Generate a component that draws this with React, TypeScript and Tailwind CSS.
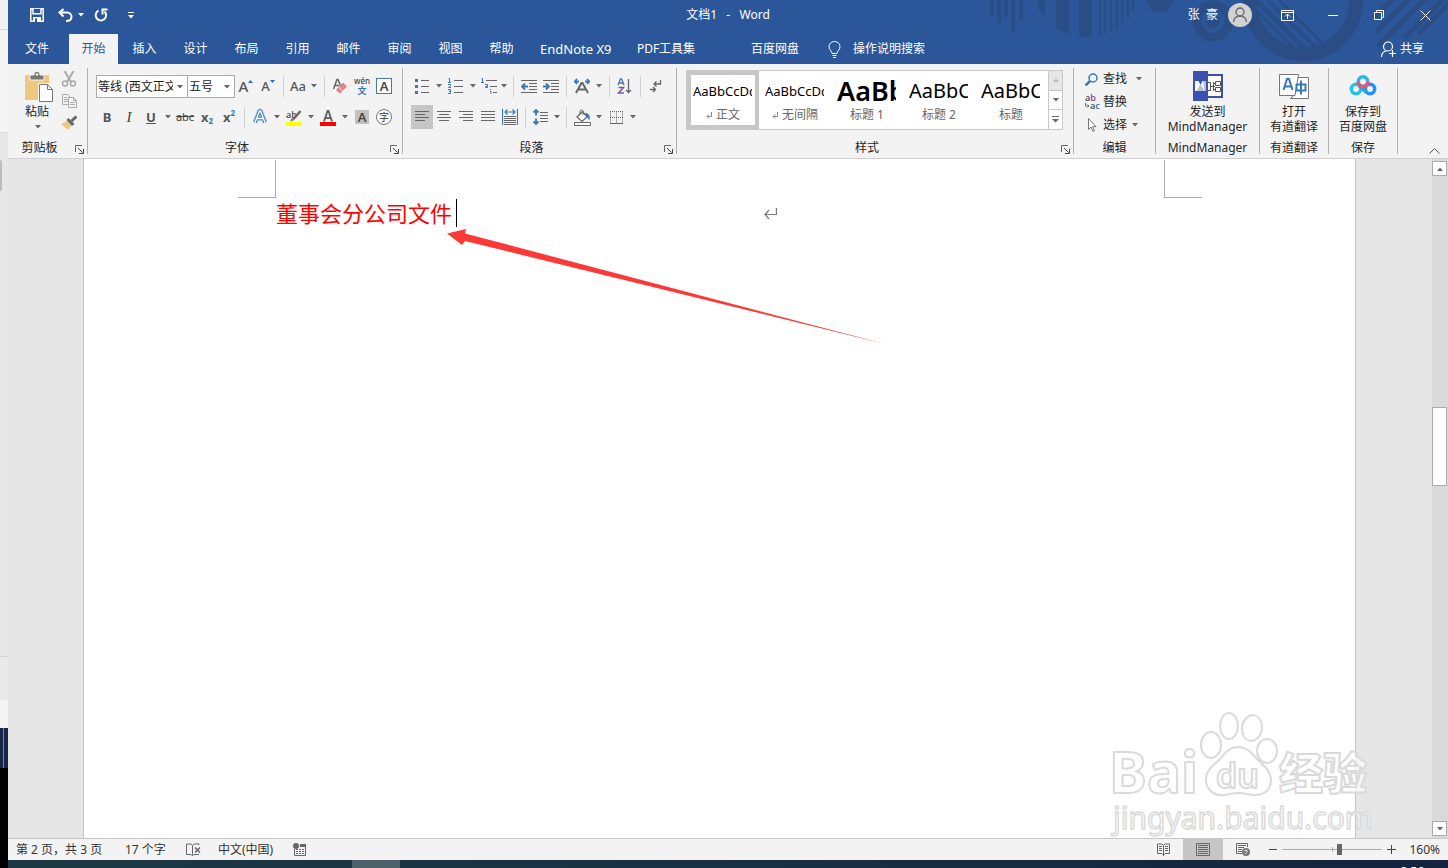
import type { ReactNode } from 'react';
import clsx from 'clsx';

const tabs = ['插入', '设计', '布局', '引用', '邮件', '审阅', '视图', '帮助'];

const styleItems = [
    { preview: 'AaBbCcDd', label: '正文', mark: true, size: 'text-[13px]' },
    { preview: 'AaBbCcDd', label: '无间隔', mark: true, size: 'text-[13px]' },
    { preview: 'AaBb', label: '标题 1', mark: false, size: 'text-[27px] font-semibold' },
    { preview: 'AaBbC', label: '标题 2', mark: false, size: 'text-[20px]' },
    { preview: 'AaBbC', label: '标题', mark: false, size: 'text-[20px]' },
];

/* ---------- small building blocks ---------- */

const Caret = ({ className = 'fill-[#666]' }: { className?: string }) => (
    <svg width="6" height="4" viewBox="0 0 6 4" className={className}>
        <path d="M0 0h6L3 3.5z" />
    </svg>
);

type BtnProps = { label: string; children?: ReactNode; className?: string };

const Btn = ({ label, children, className }: BtnProps) => (
    <button type="button" aria-label={label} className={clsx('flex h-6 shrink-0 items-center justify-center', className ?? 'w-[22px]')}>
        {children}
    </button>
);

const Drop = ({ label }: { label: string }) => (
    <Btn label={`${label}选项`} className="w-3">
        <Caret />
    </Btn>
);

const Sep = () => <div className="mx-1 h-[21px] w-px shrink-0 bg-[#d0d0d0]" />;

const Icon = ({ w = 16, h = 16, children }: { w?: number; h?: number; children: ReactNode }) => (
    <svg width={w} height={h} viewBox={`0 0 ${w} ${h}`} fill="none" stroke="#666" className="shrink-0">
        {children}
    </svg>
);

const Lines = ({ d }: { d: string }) => (
    <Icon w={14} h={14}>
        <path d={d} />
    </Icon>
);

type GroupProps = { label: string; launcher?: boolean; className: string; children: ReactNode };

const Group = ({ label, launcher, className, children }: GroupProps) => (
    <section aria-label={label} className={clsx('flex shrink-0 flex-col border-r border-[#b1b1b1]', className)}>
        <div className="flex-1">{children}</div>
        <div className="flex h-[13px] items-center">
            <span className="flex-1 text-center leading-[15px]">{label}</span>
            {launcher && (
                <button type="button" aria-label={`${label}设置`} className="flex h-[13px] w-4 items-center justify-end pr-[3px] pt-1">
                    <Icon w={9} h={9}>
                        <path d="M.5 7V.5H7" stroke="#666" />
                        <path d="M3 3l4.5 4.5M8.5 4v4.5H4" stroke="#444" />
                    </Icon>
                </button>
            )}
        </div>
    </section>
);

const Rows = ({ children }: { children: ReactNode }) => <div className="flex flex-col gap-[7px] pl-2 pt-[6px]">{children}</div>;
const Row = ({ children }: { children: ReactNode }) => <div className="flex h-6 items-center">{children}</div>;

const Combo = ({ label, value, className }: { label: string; value: string; className: string }) => (
    <div className={clsx('relative h-[23px] border border-[#ababab] bg-white', className)}>
        <select aria-label={label} className="h-full w-full appearance-none bg-white pl-px pr-[14px] pt-px text-[12px] text-[#222] outline-none">
            <option>{value}</option>
        </select>
        <span className="pointer-events-none absolute right-1 top-[9px]">
            <Caret />
        </span>
    </div>
);

/* ---------- title bar ---------- */

const HeaderArt = () => (
    <svg width="460" height="64" viewBox="988 0 460 64" className="absolute right-0 top-0 fill-[#2a4d86]" aria-hidden="true">
        <defs>
            <clipPath id="bowl"><circle cx="1087" cy="-18" r="55" /></clipPath>
            <clipPath id="ring"><circle cx="1303" cy="1" r="46" /></clipPath>
        </defs>
        <path d="M990 0h4v16h-4zM997 0h4v23h-4zM1004 0h4v17h-4zM1011 0h4v32h-4zM1019 0h4v20h-4z" />
        <path clipPath="url(#bowl)" d="M1038 0h7v40h-7zM1056 0h13v40h-13zM1079 0h13v40h-13zM1099 0h2v40h-2zM1104 0h2v40h-2zM1110 0h2v40h-2zM1116 0h2v40h-2zM1121 0h2v40h-2zM1127 0h2v40h-2zM1132 0h2v40h-2z" />
        <circle cx="1160" cy="-2" r="14" />
        <circle cx="1213" cy="21" r="16" fill="none" stroke="#2a4d86" strokeWidth="9" />
        <circle cx="1213" cy="21" r="7" />
        <circle cx="1303" cy="1" r="53" fill="none" stroke="#2a4d86" strokeWidth="14" />
        <g clipPath="url(#ring)" stroke="#2a4d86" strokeWidth="3">
            <path d="M1246 0l60 60M1257 0l60 60M1268 0l60 60M1279 0l60 60" />
            <path d="M1252 -4l64 64" strokeWidth="5" />
        </g>
        <g stroke="#2a4d86" strokeWidth="5">
            <path d="M1396 -4l-22 22M1412 -4l-36 36M1428 -4l-50 50M1446 -4l-42 42M1456 -4l-38 38" />
        </g>
    </svg>
);

const TitleBar = () => (
    <div className="grid h-[34px] grid-cols-[1fr_auto_1fr] items-center pb-1">
        <div className="flex items-center pl-[19px]">
            <Btn label="保存" className="w-5">
                <svg width="14" height="14" viewBox="0 0 14 14" fill="none" stroke="#fff" strokeWidth="1.500">
                    <path d="M.8.8h12.4v12.4H.8z" />
                    <path d="M3 .8v5h8v-5" fill="#2b579a" />
                    <path d="M3 9h8v5H3z" fill="#fff" stroke="none" />
                    <path d="M5 10.500h2V14H5z" fill="#2b579a" stroke="none" />
                </svg>
            </Btn>
            <Btn label="撤消" className="ml-2 w-5">
                <svg width="15" height="14" viewBox="0 0 15 14" fill="none" stroke="#fff" strokeWidth="2">
                    <path d="M5.500 1L1.500 4.500l4 4M2 4.500h6.500c3 0 5 1.800 5 4.200S11.500 13 8 13" />
                </svg>
            </Btn>
            <Btn label="撤消选项" className="w-3"><Caret className="fill-white" /></Btn>
            <Btn label="重复" className="ml-1 w-5">
                <svg width="14" height="14" viewBox="0 0 14 14" fill="none" stroke="#fff" strokeWidth="2">
                    <path d="M4.500 2.600A5.200 5.200 0 1 0 10.500 3.500M8.500 6.500V1.500H13.500" />
                </svg>
            </Btn>
            <Btn label="自定义快速访问工具栏" className="ml-[10px] w-5">
                <svg width="6" height="7" viewBox="0 0 6 7" className="fill-white"><path d="M0 0h6v1H0zM0 3h6L3 6.500z" /></svg>
            </Btn>
        </div>
        <h1 className="whitespace-pre leading-4 text-white">{'文档1   -   Word'}</h1>
        <div className="flex items-center justify-end text-white">
            <span className="mr-[10px] whitespace-pre">张  豪</span>
            <button type="button" aria-label="帐户" className="mr-3 flex h-6 w-6 items-center justify-center rounded-full bg-[#d2d2d2]">
                <svg width="16" height="16" viewBox="0 0 16 16" fill="none" stroke="#666" strokeWidth="1.300">
                    <circle cx="8" cy="5" r="4" />
                    <path d="M1.500 15c.5-3.500 3-6 6.500-6s6 2.500 6.500 6" />
                </svg>
            </button>
            <Btn label="功能区显示选项" className="w-[46px]">
                <svg width="13" height="11" viewBox="0 0 13 11" fill="none" stroke="#fff"><path d="M.5.5h12v10H.5zM.5 2.500h12M6.500 9V4.500M4 6.500L6.500 4 9 6.500" /></svg>
            </Btn>
            <Btn label="最小化" className="w-[46px]">
                <svg width="10" height="10" viewBox="0 0 10 10" stroke="#fff"><path d="M0 5.500h10" /></svg>
            </Btn>
            <Btn label="还原" className="w-[46px]">
                <svg width="10" height="10" viewBox="0 0 10 10" fill="none" stroke="#fff"><path d="M.5 2.500h7v7h-7zM2.500 2.500v-2h7v7h-2" /></svg>
            </Btn>
            <Btn label="关闭" className="w-[46px]">
                <svg width="11" height="11" viewBox="0 0 11 11" stroke="#fff"><path d="M.5.5l10 10M10.500.5l-10 10" /></svg>
            </Btn>
        </div>
    </div>
);

const tabClass = 'h-[30px] shrink-0 whitespace-nowrap leading-[28px]';

const TabBar = () => (
    <nav className="flex h-[30px] text-white">
        <button type="button" className={clsx(tabClass, 'mr-[3px] w-[58px]')}>文件</button>
        <button type="button" className={clsx(tabClass, 'w-[49px] bg-[#f3f3f3] text-[#2b579a]')}>开始</button>
        {tabs.map((t) => (
            <button key={t} type="button" className={clsx(tabClass, 'ml-[2px] w-[49px]')}>{t}</button>
        ))}
        <button type="button" className={clsx(tabClass, 'ml-[2px] w-[97px] pl-3 text-left text-[13px]')}>EndNote X9</button>
        <button type="button" className={clsx(tabClass, 'w-[82px]')}>PDF工具集</button>
        <button type="button" className={clsx(tabClass, 'ml-8 w-[72px]')}>百度网盘</button>
        <button type="button" className={clsx(tabClass, 'ml-[17px] flex items-center gap-3')}>
            <svg width="13" height="17" viewBox="0 0 13 17" fill="none" stroke="#fff">
                <path d="M4 12.500c0-2.500-3-3.500-3-7a5.500 5 0 0 1 11 0c0 3.500-3 4.500-3 7zM4.500 14.500h4M5 16.500h3" />
            </svg>
            操作说明搜索
        </button>
        <button type="button" className={clsx(tabClass, 'ml-auto mr-6 flex items-center gap-1')}>
            <svg width="15" height="17" viewBox="0 0 15 17" fill="none" stroke="#fff" strokeWidth="1.200">
                <circle cx="7" cy="5.500" r="4.500" />
                <path d="M.5 16c0-3.500 2-5.500 5-6M11.500 9v7M8 12.500h7" />
            </svg>
            共享
        </button>
    </nav>
);

/* ---------- ribbon ---------- */

const ClipboardGroup = () => (
    <Group label="剪贴板" launcher className="w-20">
        <div className="flex">
            <button type="button" className="ml-4 mr-[2px] flex w-[30px] flex-col items-start pt-[3px]">
                <svg width="30" height="32" viewBox="0 0 30 32" className="shrink-0">
                    <path d="M1 4h24v25H1z" fill="#edc87e" />
                    <path d="M6 4h4c0-5 6-5 6 0h4v5H6z" fill="#777" stroke="#f3f3f3" />
                    <circle cx="13" cy="3.500" r="1.200" fill="#fff" />
                    <path d="M14 12h11l5 5v15H14z" fill="#f3f3f3" />
                    <path d="M15.500 13.500h8l5 5v12h-13z" fill="#fff" stroke="#777" />
                    <path d="M23.500 13.500v5h5" fill="none" stroke="#777" />
                </svg>
                <span className="w-[26px] text-center leading-[18px]">粘贴</span>
                <span className="flex w-[28px] justify-center pt-1"><Caret /></span>
            </button>
            <div className="flex w-[26px] flex-col items-center">
                <button type="button" aria-label="剪切" className="flex h-[22px] items-center">
                    <Icon>
                        <g stroke="#aaa" strokeWidth="1.500">
                            <path d="M3.500 0l6.500 11M12.500 0L6 11" strokeWidth="2" />
                            <circle cx="4" cy="12.500" r="2.500" /><circle cx="12" cy="12.500" r="2.500" />
                        </g>
                    </Icon>
                </button>
                <button type="button" aria-label="复制" className="flex h-[22px] items-center">
                    <Icon>
                        <g stroke="#aaa" fill="#f3f3f3">
                            <path d="M1.500 1.500h5l3 3v7h-8zM3 4.500h3M3 6.500h4M3 8.500h4" />
                            <path d="M7.500 4.500h5l3 3v7h-8zM12.500 4.500v3h3M9 9.500h5M9 11.500h5" />
                        </g>
                    </Icon>
                </button>
                <button type="button" aria-label="格式刷" className="flex h-[22px] items-center">
                    <Icon>
                        <path d="M0 9l6-3 4.500 4.500L7 15z" fill="#edc87e" stroke="none" />
                        <path d="M5.500 5l2-2 6 6-2.500 2z" fill="#666" stroke="none" />
                        <path d="M10.500 6L15.500 1.500" strokeWidth="3" />
                    </Icon>
                </button>
            </div>
        </div>
    </Group>
);

const glyph = 'font-bold text-[#555] leading-5';

const FontGroup = () => (
    <Group label="字体" launcher className="w-[315px]">
        <Rows>
            <Row>
                <Combo label="字体名称" value="等线 (西文正文)" className="w-[92px]" />
                <Combo label="字号" value="五号" className="-ml-px w-12" />
                <Btn label="增大字号">
                    <span className="text-[15px] font-medium text-[#555]">A</span>
                    <svg width="5" height="12" viewBox="0 0 5 12" className="fill-[#2f6fb0]"><path d="M0 3h5L2.500 0z" /></svg>
                </Btn>
                <Btn label="减小字号">
                    <span className="text-[13px] font-medium text-[#555]">A</span>
                    <svg width="5" height="12" viewBox="0 0 5 12" className="fill-[#2f6fb0]"><path d="M0 0h5L2.500 3z" /></svg>
                </Btn>
                <Sep />
                <Btn label="更改大小写" className="w-5"><span className="text-[13px] font-medium text-[#555]">Aa</span></Btn>
                <Drop label="更改大小写" />
                <Sep />
                <Btn label="清除所有格式">
                    <Icon>
                        <path d="M1.500 11L5 1.500h1L9 9M3 7.500h4" strokeWidth="1.500" />
                        <path d="M5 11l6-6 3.500 3.500-6 6H7l-2-2z" fill="#e8808f" stroke="#e8808f" />
                        <path d="M6.500 9l4 4" stroke="#f3f3f3" />
                    </Icon>
                </Btn>
                <Btn label="拼音指南" className="w-[22px] flex-col">
                    <span className="text-[8px] font-medium leading-[8px] text-[#444]">wén</span>
                    <span className="text-[9px] font-bold leading-[11px] text-[#3a78b5]">文</span>
                </Btn>
                <Btn label="字符边框">
                    <span className="h-4 w-4 border border-[#3f7ab0] bg-white text-center text-[13px] font-semibold leading-[14px] text-[#444]">A</span>
                </Btn>
            </Row>
            <Row>
                <Btn label="加粗"><b className={clsx(glyph, 'text-[13px]')}>B</b></Btn>
                <Btn label="倾斜"><i className="font-['Liberation_Serif',serif] text-[15px] leading-5 text-[#444]">I</i></Btn>
                <Btn label="下划线"><u className={clsx(glyph, 'text-[13px]')}>U</u></Btn>
                <Drop label="下划线" />
                <Btn label="删除线"><s className="text-[11px] leading-5 text-[#444]">abc</s></Btn>
                <Btn label="下标"><span className={clsx(glyph, 'text-[13px]')}>x</span><span className="pt-2 text-[8px] font-bold text-[#3a78b5]">2</span></Btn>
                <Btn label="上标"><span className={clsx(glyph, 'text-[13px]')}>x</span><span className="pb-2 text-[8px] font-bold text-[#3a78b5]">2</span></Btn>
                <Sep />
                <Btn label="文本效果">
                    <svg width="18" height="18" viewBox="0 0 18 18" fill="none" strokeLinejoin="round">
                        <path d="M4 14.500L8.500 3h1L14 14.500M6 10.500h6" stroke="#c4dbf1" strokeWidth="5.500" />
                        <path d="M4 14.500L8.500 3h1L14 14.500M6 10.500h6" stroke="#4a84c0" strokeWidth="3.500" />
                        <path d="M4 14.500L8.500 3h1L14 14.500M6 10.500h6" stroke="#fff" strokeWidth="1.300" />
                    </svg>
                </Btn>
                <Drop label="文本效果" />
                <Btn label="突出显示">
                    <Icon w={16} h={17}>
                        <text x="0" y="9" fontSize="9" fontWeight="600" fill="#555" stroke="none">ab</text>
                        <path d="M14.500 2l-7 8" strokeWidth="2.500" /><path d="M4 12.500l2-3.500 2.500 2z" fill="#666" stroke="none" />
                        <path d="M0 13h16v4H0z" fill="#ff0" stroke="none" />
                    </Icon>
                </Btn>
                <Drop label="突出显示" />
                <Btn label="字体颜色">
                    <Icon w={16} h={17}>
                        <path d="M4 12.500L7.500 2h1L12 12.500M5 9h6" strokeWidth="2" />
                        <path d="M0 13h16v4H0z" fill="#f00" stroke="none" />
                    </Icon>
                </Btn>
                <Drop label="字体颜色" />
                <Btn label="字符底纹"><span className="h-[14px] w-[14px] bg-[#c1c1c1] text-center text-[13px] font-semibold leading-[14px] text-[#444]">A</span></Btn>
                <Btn label="带圈字符"><span className="h-4 w-4 rounded-full border border-[#777] bg-white text-center text-[10px] leading-[14px] text-[#333]">字</span></Btn>
            </Row>
        </Rows>
    </Group>
);

const Arrows = ({ d }: { d: string }) => <path d={d} stroke="#3a78b5" strokeWidth="1.800" />;

const ParagraphGroup = () => (
    <Group label="段落" launcher className="w-[274px]">
        <Rows>
            <Row>
                <Btn label="项目符号">
                    <Icon w={14}>
                        <path d="M6 2.500h8M6 8.500h8M6 14.500h8" />
                        <path d="M0 1h3v3H0zM0 7h3v3H0zM0 13h3v3H0z" fill="#3a78b5" stroke="none" />
                    </Icon>
                </Btn>
                <Drop label="项目符号" />
                <Btn label="编号">
                    <Icon w={16}>
                        <path d="M6 2.500h9M6 8.500h9M6 14.500h9" />
                        <path d="M.5.500h1v4M0 4.500h3M0 6.500h2.500v1.500L.5 9.500H3M0 11.500h2.500v4H0M1 13.500h1.500" stroke="#3a78b5" />
                    </Icon>
                </Btn>
                <Drop label="编号" />
                <Btn label="多级列表" className="w-5">
                    <Icon w={16}>
                        <path d="M5 2.500h11M9 8.500h7M12 14.500h4" />
                        <path d="M.5.500h1v4M0 4.500h3M4 6.500h2.500v3H4.500v-1h2M9.500 11v1M9 13.500h1V16" stroke="#3a78b5" />
                    </Icon>
                </Btn>
                <Btn label="多级列表选项" className="w-[10px]"><Caret /></Btn>
                <Sep />
                <Btn label="减少缩进量">
                    <Icon>
                        <path d="M0 2.500h16M8 5.500h8M8 8.500h8M8 11.500h8M0 14.500h16" />
                        <Arrows d="M7 8.500H1M4 5.500L1 8.500l3 3" />
                    </Icon>
                </Btn>
                <Btn label="增加缩进量">
                    <Icon>
                        <path d="M0 2.500h16M8 5.500h8M8 8.500h8M8 11.500h8M0 14.500h16" />
                        <Arrows d="M0 8.500h6M3 5.500l3 3-3 3" />
                    </Icon>
                </Btn>
                <Sep />
                <Btn label="中文版式">
                    <Icon>
                        <path d="M2 15L7.500 5h1L14 15M4.500 11.500h7" strokeWidth="2" />
                        <Arrows d="M5 3.500H1M3 1L.8 3.500 3 6M11 3.500h4M13 1l2.200 2.500L13 6" />
                    </Icon>
                </Btn>
                <Drop label="中文版式" />
                <Sep />
                <Btn label="排序">
                    <Icon>
                        <path d="M1 7L3.500.8h1L7 7M2 5h4" stroke="#3a78b5" strokeWidth="1.300" />
                        <path d="M1.500 9.500h5l-5 5.500H7" stroke="#8e4bab" strokeWidth="1.500" />
                        <path d="M11.500 1v13.500M9 12l2.500 2.500L14 12" strokeWidth="1.300" />
                    </Icon>
                </Btn>
                <Sep />
                <Btn label="显示编辑标记">
                    <Icon w={12} h={14}>
                        <path d="M10.500 1v4H4M6.500 2.500L4 5l2.500 2.500M0 10.500h5.500M3 8l2.500 2.500L3 13" strokeWidth="1.300" />
                    </Icon>
                </Btn>
            </Row>
            <Row>
                <Btn label="左对齐" className="w-[22px] bg-[#c6c6c6]"><Lines d="M0 1.500h14M0 4.500h10M0 7.500h14M0 10.500h10" /></Btn>
                <Btn label="居中"><Lines d="M0 1.500h14M2 4.500h10M0 7.500h14M2 10.500h10" /></Btn>
                <Btn label="右对齐"><Lines d="M0 1.500h14M4 4.500h10M0 7.500h14M4 10.500h10" /></Btn>
                <Btn label="两端对齐"><Lines d="M0 1.500h14M0 4.500h14M0 7.500h14M0 10.500h14" /></Btn>
                <Btn label="分散对齐">
                    <Icon>
                        <path d="M2 7.500h12M2 9.500h12M2 11.500h12M2 13.500h12M2 15.500h12" />
                        <path d="M.5 0v16M15.500 0v16M3 3h10M5.500.5L3 3l2.500 2.500M10.500.5L13 3l-2.500 2.500" stroke="#3a78b5" strokeWidth="1.200" />
                    </Icon>
                </Btn>
                <Sep />
                <Btn label="行距">
                    <Icon>
                        <path d="M7 3.500h8M7 6.500h8M7 9.500h8M7 12.500h8" />
                        <Arrows d="M3 1v5.500M.5 3.500L3 1l2.500 2.500M3 9.500V15M.5 12.500L3 15l2.500-2.500" />
                    </Icon>
                </Btn>
                <Btn label="行距选项" className="w-[10px]"><Caret /></Btn>
                <Sep />
                <Btn label="底纹">
                    <Icon w={17} h={17}>
                        <path d="M3 8l5.500-5.500L13 8l-5 4.500z" fill="#fff" strokeWidth="1.200" />
                        <path d="M6 6V2.500a1.500 1.500 0 0 1 3 0V6" />
                        <path d="M11 4c3.500 0 5.500 2 4.500 7.500l-2.500-3.500z" fill="#3a78b5" stroke="none" />
                        <path d="M.5 13.500h16v3H.5z" fill="#fff" />
                    </Icon>
                </Btn>
                <Drop label="底纹" />
                <Btn label="边框">
                    <Icon w={13} h={13}>
                        <path d="M.5.5v12M6.500.5v12M12.500.5v12M0 .5h13M0 6.500h13" strokeDasharray="1 1" />
                        <path d="M0 12.500h13" />
                    </Icon>
                </Btn>
                <Drop label="边框" />
            </Row>
        </Rows>
    </Group>
);

const StylesGroup = () => (
    <Group label="样式" launcher className="w-[397px]">
        <div className="ml-[9px] mt-[2px] flex h-[60px] w-[377px] border border-[#c8c8c8] bg-white">
            {styleItems.map((s, i) => (
                <button
                    key={s.label}
                    type="button"
                    className={clsx('h-[58px] w-[72px] shrink-0 overflow-hidden border-4', i === 0 ? 'border-[#c6c6c6]' : 'border-transparent')}
                >
                    <span className={clsx('ml-[2px] block h-[30px] w-[59px] overflow-hidden whitespace-nowrap text-left leading-[28px] text-black', s.size)}>{s.preview}</span>
                    <span className="flex items-center justify-center gap-1 leading-4 text-[#666]">
                        {s.mark && (
                            <svg width="6" height="7" viewBox="0 0 6 7" fill="none" stroke="#888"><path d="M5.500 0v4.500H1M3 2.500L1 4.500l2 2" /></svg>
                        )}
                        {s.label}
                    </span>
                </button>
            ))}
            <div className="ml-auto flex w-[14px] flex-col divide-y divide-[#c8c8c8] border-l border-[#c8c8c8]">
                <button type="button" aria-label="上一行" className="flex flex-1 items-center justify-center bg-[#e6e6e6]">
                    <span className="rotate-180"><Caret className="fill-[#b8b8b8]" /></span>
                </button>
                <button type="button" aria-label="下一行" className="flex flex-1 items-center justify-center"><Caret /></button>
                <button type="button" aria-label="其他样式" className="flex flex-1 items-center justify-center">
                    <svg width="7" height="7" viewBox="0 0 7 7" className="fill-[#666]"><path d="M0 0h7v1H0zM0 3h7L3.500 6.500z" /></svg>
                </button>
            </div>
        </div>
    </Group>
);

const EditGroup = () => (
    <Group label="编辑" className="w-[82px]">
        <div className="flex flex-col pl-[11px]">
            <button type="button" className="flex h-[22px] items-center gap-[5px]">
                <Icon w={13} h={13}>
                    <circle cx="8" cy="5" r="4" stroke="#3a78b5" strokeWidth="1.500" /><path d="M5 8l-4.500 4.500" stroke="#3a78b5" strokeWidth="2.500" />
                </Icon>
                <span className="mr-1">查找</span>
                <Caret />
            </button>
            <button type="button" className="mt-px flex h-[22px] items-center gap-[2px]">
                <Icon>
                    <g stroke="none" fontSize="9" fontWeight="600" fill="#555">
                        <text x="0" y="7">a<tspan fill="#8e4bab">b</tspan></text>
                        <text x="5" y="15">a<tspan fill="#3a78b5">c</tspan></text>
                    </g>
                    <path d="M.5 9v3H4M2.500 10.500L4 12l-1.500 1.500" stroke="#3a78b5" />
                </Icon>
                替换
            </button>
            <button type="button" className="mt-px flex h-[22px] items-center gap-[5px]">
                <Icon w={13} h={16}>
                    <path d="M3.500 1.500v11l2.500-2.500 2 4.500 1.500-.8-2-4h3.500z" fill="#fff" stroke="#777" />
                </Icon>
                选择
                <Caret />
            </button>
        </div>
    </Group>
);

const BigButton = ({ lines, children }: { lines: string[]; children: ReactNode }) => (
    <button type="button" className="flex w-full flex-col items-center pt-[3px]">
        {children}
        <span className="mt-[3px] text-center leading-[15px]">
            {lines[0]}
            <br />
            {lines[1]}
        </span>
    </button>
);

const AddinGroups = () => (
    <>
        <Group label="MindManager" className="w-[104px]">
            <BigButton lines={['发送到', 'MindManager']}>
                <svg width="30" height="30" viewBox="0 0 30 30" fill="none">
                    <path d="M14 4h15v22H14z" fill="#fff" stroke="#3d50a8" strokeWidth="2" />
                    <path d="M0 0h15v30H0z" fill="#3a51b0" />
                    <path d="M2 10h3.500l2 4 2-4H13v10H2z" fill="#fff" />
                    <path d="M7.500 13l4 7h-8zM10 10h3v10h-1.500z" fill="#b9bfd4" />
                    <path d="M15 11.500h2.500v8H15M18 15.500h4M20.500 11v9M20.500 12.500h2M20.500 18.500h2M22.500 10.500h5v4h-5zM22.500 16.500h5v4h-5z" stroke="#555" />
                </svg>
            </BigButton>
        </Group>
        <Group label="有道翻译" className="w-[69px]">
            <BigButton lines={['打开', '有道翻译']}>
                <svg width="30" height="30" viewBox="0 0 30 30" fill="none">
                    <path d="M16.500 6.500h13v21h-18l5-5z" fill="#fff" stroke="#777" />
                    <path d="M.5 3.500h19l-3.500 21H.5z" fill="#fff" stroke="#777" />
                    <path d="M4.500 19L8 8h2l3.500 11M5.500 15.500h7" stroke="#3a78b5" strokeWidth="2" />
                    <path d="M17.500 13.500h9v6h-9zM22 9.500v14" stroke="#3a78b5" strokeWidth="2" />
                </svg>
            </BigButton>
        </Group>
        <Group label="保存" className="w-[69px]">
            <BigButton lines={['保存到', '百度网盘']}>
                <svg width="28" height="30" viewBox="0 0 28 30" fill="none" strokeWidth="3.500">
                    <circle cx="7" cy="18" r="4.700" stroke="#22c3e6" />
                    <circle cx="21" cy="18" r="4.700" stroke="#1e90ff" />
                    <path d="M10.500 15l7 6.500" stroke="#1da5f5" />
                    <circle cx="14" cy="10.500" r="4.700" stroke="#2ab4ef" />
                    <path d="M9.300 11a4.700 4.700 0 0 0 9.400 0" stroke="#f2506c" />
                </svg>
            </BigButton>
        </Group>
    </>
);

const Ribbon = () => (
    <div className="flex h-[95px] overflow-hidden border-b border-[#cfcfcf] bg-[#f3f3f3] py-1 text-[#262626]">
        <ClipboardGroup />
        <FontGroup />
        <ParagraphGroup />
        <StylesGroup />
        <EditGroup />
        <AddinGroups />
        <button type="button" aria-label="折叠功能区" className="ml-auto mr-2 self-end">
            <Icon w={11} h={6}><path d="M.5 5.500l5-5 5 5" stroke="#555" /></Icon>
        </button>
    </div>
);

/* ---------- document ---------- */

const Watermark = () => (
    <svg width="264" height="128" viewBox="1108 710 264 128" className="pointer-events-none absolute bottom-0 right-[76px]" aria-hidden="true">
        <g fill="#fff" fillOpacity="0.7" stroke="#dadada" strokeWidth="2" strokeLinejoin="round">
            <text x="1109" y="793" fontSize="57" fontWeight="700">Bai</text>
            <text x="1279" y="790" fontSize="44" fontWeight="900">经验</text>
            <text x="1113" y="829" fontSize="30" strokeWidth="1.500">jingyan.baidu.com</text>
            <ellipse cx="1211" cy="745" rx="10" ry="13" />
            <ellipse cx="1229" cy="726" rx="9" ry="13" />
            <ellipse cx="1252" cy="728" rx="10" ry="13" transform="rotate(8 1252 728)" />
            <ellipse cx="1267" cy="751" rx="10" ry="12" />
            <path d="M1238 747c-10 0-14 8-20 14-6 5-13 11-12 20 1 10 9 15 18 14 6-1 9-2 15-2s10 2 16 2c9 0 16-5 16-15 0-9-7-14-12-19-6-6-11-14-21-14z" />
            <text x="1216" y="788" fontSize="34" fontWeight="600">du</text>
        </g>
    </svg>
);

const DocumentArea = () => (
    <main className="relative flex min-h-0 flex-1 bg-[#e6e6e6]">
        <div className="w-[75px] shrink-0" />
        <article className="flex-1 border-x border-[#c6c6c6] bg-white pl-[154px] pr-[153px] pt-px">
            <div className="flex justify-between">
                <div className="h-[38px] w-[38px] border-b border-r border-[#ababab]" />
                <div className="h-[38px] w-[38px] border-b border-l border-[#ababab]" />
            </div>
            <p className="flex items-center pl-[38px] pt-px">
                <span className="w-[488px] text-[22px] leading-[28px] text-[#f00]">
                    <span className="inline-block border-r border-black pr-1">董事会分公司文件</span>
                </span>
                <svg width="13" height="11" viewBox="0 0 13 11" fill="none" stroke="#777" strokeWidth="1.200">
                    <path d="M12.400 0v6.500H1M5 2L1 6.500 5 11" />
                </svg>
            </p>
        </article>
        <div className="w-[76px] shrink-0" />
        <div className="flex w-4 shrink-0 flex-col bg-[#dadada] py-[2px]">
            <button type="button" aria-label="向上滚动" className="flex h-[15px] w-[15px] items-center justify-center border border-[#ababab] bg-white">
                <span className="rotate-180"><Caret /></span>
            </button>
            <div className="flex-[231]" />
            <div className="h-[79px] w-[15px] border border-[#ababab] bg-white" />
            <div className="flex-[335]" />
            <button type="button" aria-label="向下滚动" className="flex h-[15px] w-[15px] items-center justify-center border border-[#ababab] bg-white">
                <Caret />
            </button>
        </div>
        <svg width="440" height="118" viewBox="446 228 440 118" className="pointer-events-none absolute left-[438px] top-[69px]" aria-hidden="true">
            <path d="M447 233.500L466 229l-1 4.500L885 344 465 241l-3 4z" fill="#fb3a37" />
        </svg>
        <Watermark />
    </main>
);

/* ---------- status bar ---------- */

const StatusBar = () => (
    <footer className="flex h-[22px] shrink-0 items-center border-t border-[#c6c6c6] bg-[#f3f3f3] pl-2 pr-2 text-[#333]">
        <button type="button" className="w-[109px] text-left">第 2 页，共 3 页</button>
        <button type="button" className="w-[61px] text-left">17 个字</button>
        <button type="button" aria-label="校对" className="w-8">
            <Icon w={15} h={13}>
                <path d="M6.500 2.500L5 1H.5v10.500H5L6.500 13 8 11.500h5M6.500 2.500L8 1h5v1M6.500 2.500V12" />
                <path d="M9 4.500l5 5M14 4.500l-5 5" strokeWidth="1.500" />
            </Icon>
        </button>
        <button type="button" className="w-[75px] text-left">中文(中国)</button>
        <button type="button" aria-label="录制宏">
            <Icon w={13} h={13}>
                <path d="M7 1h6v3H7z" fill="#666" stroke="none" />
                <circle cx="3" cy="3" r="3" fill="#666" stroke="none" />
                <path d="M1.500 6v6.500h11V3" />
                <path d="M3 6.500h8M3 8.500h8M3 10.500h8" strokeDasharray="2 1" />
            </Icon>
        </button>
        <div className="ml-auto flex h-full items-center">
            <button type="button" aria-label="阅读视图" className="flex h-full w-10 items-center justify-center">
                <Icon w={13} h={13}>
                    <path d="M6.500 2.500L5 1H.5v9.500H5L6.500 12 8 10.500h4.500V1H8zM6.500 2.500V13M2 3.500h3M2 5.500h3M2 7.500h3M8 3.500h3M8 5.500h3M8 7.500h3" />
                </Icon>
            </button>
            <button type="button" aria-label="页面视图" className="flex h-full w-10 items-center justify-center bg-[#c6c6c6]">
                <Icon w={14} h={13}><path d="M.5.5h13v12H.5zM2 2.500h10M2 4.500h10M2 6.500h10M2 8.500h10M2 10.500h10" /></Icon>
            </button>
            <button type="button" aria-label="Web 版式视图" className="flex h-full w-10 items-center justify-center">
                <Icon w={14} h={13}>
                    <path d="M6 10.500H.5V.5h11V4M2 2.500h8M2 4.500h6M2 6.500h4M2 8.500h4" />
                    <circle cx="10" cy="9" r="4" fill="#777" stroke="none" /><path d="M8 8l3-1v2l-2 2" stroke="#ddd" />
                </Icon>
            </button>
            <button type="button" aria-label="缩小" className="flex h-full w-[19px] items-center justify-center">
                <Icon w={8} h={9}><path d="M0 4.500h8" stroke="#444" /></Icon>
            </button>
            <input
                type="range"
                aria-label="显示比例"
                min="0"
                max="100"
                defaultValue="58"
                className="h-[11px] w-[100px] appearance-none bg-[linear-gradient(#ababab,#ababab),linear-gradient(#ababab,#ababab)] bg-[length:100%_1px,1px_5px] bg-center bg-no-repeat [&::-webkit-slider-thumb]:h-[11px] [&::-webkit-slider-thumb]:w-[5px] [&::-webkit-slider-thumb]:appearance-none [&::-webkit-slider-thumb]:bg-[#666]"
            />
            <button type="button" aria-label="放大" className="flex h-full w-[18px] items-center justify-center">
                <Icon w={9} h={9}><path d="M0 4.500h9M4.500 0v9" stroke="#444" /></Icon>
            </button>
            <button type="button" className="w-10 text-right">160%</button>
        </div>
    </footer>
);

export default function App() {
    return (
        <div className="flex h-screen overflow-hidden bg-white font-['Noto_Sans','Noto_Sans_CJK_SC',sans-serif] text-[12px] leading-4">
            {/* edge of the window behind */}
            <aside className="flex w-2 shrink-0 flex-col bg-black">
                <div className="h-[30px] border-b border-[#d3d6df] bg-[#f0f1f7]" />
                <div className="h-[103px] border-b border-[#d8d8d8] bg-[#f5f5f5]" />
                <div className="flex-1 bg-[#e7e7e7] pt-[27px]">
                    <div className="h-[31px] w-[2px] rounded-r bg-[#bcbcbc]" />
                </div>
                <div className="h-11 border-t border-[#d5d5d5] bg-[#e9e9e9]" />
                <div className="h-7 bg-[#f5f5f5]" />
                <div className="h-10 bg-[#18264a] pl-[3px]">
                    <div className="h-full w-px bg-[#7c869e]" />
                </div>
                <div className="h-[100px]" />
            </aside>
            <div className="flex min-w-0 flex-1 flex-col">
                <header className="relative shrink-0 bg-[#2b579a]">
                    <HeaderArt />
                    <div className="relative">
                        <TitleBar />
                        <TabBar />
                    </div>
                </header>
                <Ribbon />
                <DocumentArea />
                <StatusBar />
                <div className="flex h-2 shrink-0 overflow-hidden bg-linear-to-r from-[#1d3a44] to-[#15243f]">
                    <div className="ml-[344px] w-12 bg-[#4c636b]" />
                    <time className="ml-auto mr-6 pt-1 text-white">8:56</time>
                </div>
            </div>
        </div>
    );
}
